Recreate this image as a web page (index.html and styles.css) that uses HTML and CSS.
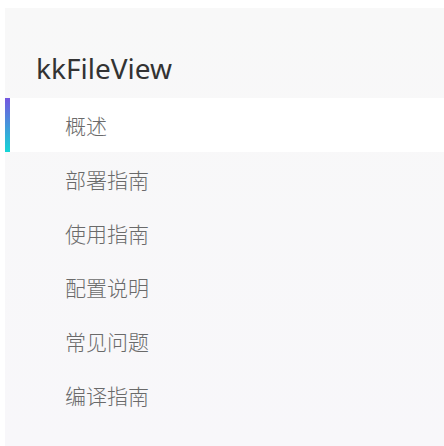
FILE: index.html
```html
<!DOCTYPE html>
<html lang="zh">
<head>
<meta charset="utf-8">
<link rel="stylesheet" href="styles.css">
</head>
<body>
<nav class="sidebar">
  <h1 class="title">kkFileView</h1>
  <ul class="menu">
    <li class="item active"><span class="label">概述</span></li>
    <li class="item"><span class="label">部署指南</span></li>
    <li class="item"><span class="label">使用指南</span></li>
    <li class="item"><span class="label">配置说明</span></li>
    <li class="item"><span class="label">常见问题</span></li>
    <li class="item"><span class="label">编译指南</span></li>
  </ul>
</nav>
</body>
</html>
```
FILE: styles.css
```css
html, body {
  margin: 0;
  padding: 0;
  background: #ffffff;
  height: 100%;
}
body {
  padding: 8px 0 0 5px;
  box-sizing: border-box;
  font-family: "Noto Sans", "Noto Sans CJK SC", sans-serif;
}
.sidebar {
  background: linear-gradient(#f8f8f8, #f8f7fa);
  height: 100%;
  box-sizing: border-box;
}
.title {
  margin: 0;
  height: 90px;
  box-sizing: border-box;
  padding: 41px 0 0 31px;
  font-size: 28px;
  line-height: 38px;
  font-weight: 400;
  color: #333333;
}
.menu {
  list-style: none;
  margin: 0;
  padding: 0;
}
.item {
  height: 54px;
  display: flex;
  align-items: center;
  padding-left: 60px;
  font-size: 21px;
  color: #6a6a6a;
  box-sizing: border-box;
}
.item.active {
  background: #ffffff;
  position: relative;
}
.item.active::before {
  content: "";
  position: absolute;
  left: 0;
  top: 0;
  bottom: 0;
  width: 5px;
  background: linear-gradient(#7556e0, #14d6d6);
}
.label {
  font-family: "Noto Sans CJK SC", sans-serif;
  font-weight: 300;
  line-height: 1;
}
```
